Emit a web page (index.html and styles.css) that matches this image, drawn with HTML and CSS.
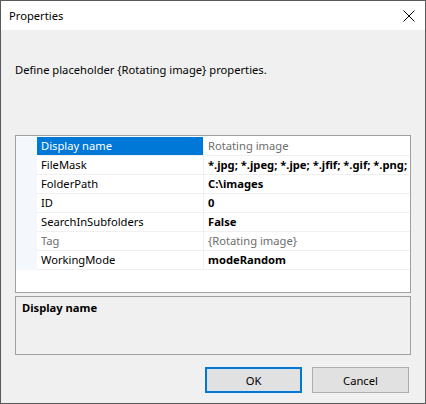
FILE: index.html
```html
<!DOCTYPE html>
<html>
<head>
<meta charset="utf-8">
<link rel="stylesheet" href="styles.css">
</head>
<body>
<div class="window">
  <div class="titlebar">
    <span class="title">Properties</span>
    <svg class="close" width="12" height="12" viewBox="0 0 12 12"><path d="M0.5 0.5 L11.5 11.5 M11.5 0.5 L0.5 11.5" stroke="#000" stroke-width="1" fill="none"/></svg>
  </div>
  <div class="body">
    <p class="intro">Define placeholder {Rotating image} properties.</p>
    <div class="grid">
      <div class="row selected"><div class="gutter"></div><div class="name">Display name</div><div class="value ro">Rotating image</div></div>
      <div class="row"><div class="gutter"></div><div class="name">FileMask</div><div class="value">*.jpg; *.jpeg; *.jpe; *.jfif; *.gif; *.png; *.bmp</div></div>
      <div class="row"><div class="gutter"></div><div class="name">FolderPath</div><div class="value">C:\images</div></div>
      <div class="row"><div class="gutter"></div><div class="name">ID</div><div class="value">0</div></div>
      <div class="row"><div class="gutter"></div><div class="name">SearchInSubfolders</div><div class="value">False</div></div>
      <div class="row"><div class="gutter"></div><div class="name ro">Tag</div><div class="value ro">{Rotating image}</div></div>
      <div class="row"><div class="gutter"></div><div class="name">WorkingMode</div><div class="value">modeRandom</div></div>
    </div>
    <div class="desc"><span class="desc-title">Display name</span></div>
    <div class="buttons">
      <button class="btn default">OK</button>
      <button class="btn">Cancel</button>
    </div>
  </div>
</div>
</body>
</html>
```
FILE: styles.css
```css
* { box-sizing: border-box; }
html, body { margin: 0; padding: 0; }
body {
  font-family: "Noto Sans", "Liberation Sans", sans-serif;
  font-size: 11.2px;
  color: #000;
  background: #f0f0f0;
}
.window {
  width: 426px;
  height: 404px;
  border: 1px solid #5a5a5a;
  background: #f0f0f0;
  display: flex;
  flex-direction: column;
}
.titlebar {
  height: 29px;
  background: #fff;
  display: flex;
  align-items: center;
  justify-content: space-between;
  padding: 0 10px 0 8px;
}
.title { font-size: 11.2px; line-height: 16px; }
.close { display: block; }
.body {
  flex: 1;
  display: flex;
  flex-direction: column;
  padding: 0 14px;
}
.intro {
  margin: 32px 0 0 0;
  line-height: 16px;
  height: 16px;
}
.grid {
  margin-top: 57px;
  height: 158px;
  border: 1px solid #a0a0a0;
  background: #fff;
  padding-top: 1px;
  display: flex;
  flex-direction: column;
}
.row {
  display: flex;
  height: 19px;
}
.gutter {
  width: 21px;
  background: #f4f7fc;
}
.name, .value {
  height: 19px;
  line-height: 18px;
  border-bottom: 1px solid #f0f0f0;
  white-space: nowrap;
  overflow: hidden;
}
.name {
  width: 167px;
  padding-left: 4px;
  border-right: 1px solid #f0f0f0;
}
.value {
  flex: 1;
  padding-left: 4px;
  font-weight: bold;
}
.ro { color: #6d6d6d; font-weight: normal; }
.selected .name { background: #0078d7; color: #fff; }
.desc {
  margin-top: 3px;
  height: 59px;
  border: 1px solid #a0a0a0;
  padding: 3px 0 0 6px;
}
.desc-title { font-weight: bold; line-height: 16px; }
.buttons {
  margin-top: 12px;
  display: flex;
  justify-content: flex-end;
  gap: 10px;
  padding-right: 2px;
}
.btn {
  width: 97px;
  height: 26px;
  background: #e1e1e1;
  border: 1px solid #adadad;
  font-family: inherit;
  font-size: 11.2px;
  color: #000;
  padding: 0;
}
.btn.default { border: 2px solid #0078d7; }
```
